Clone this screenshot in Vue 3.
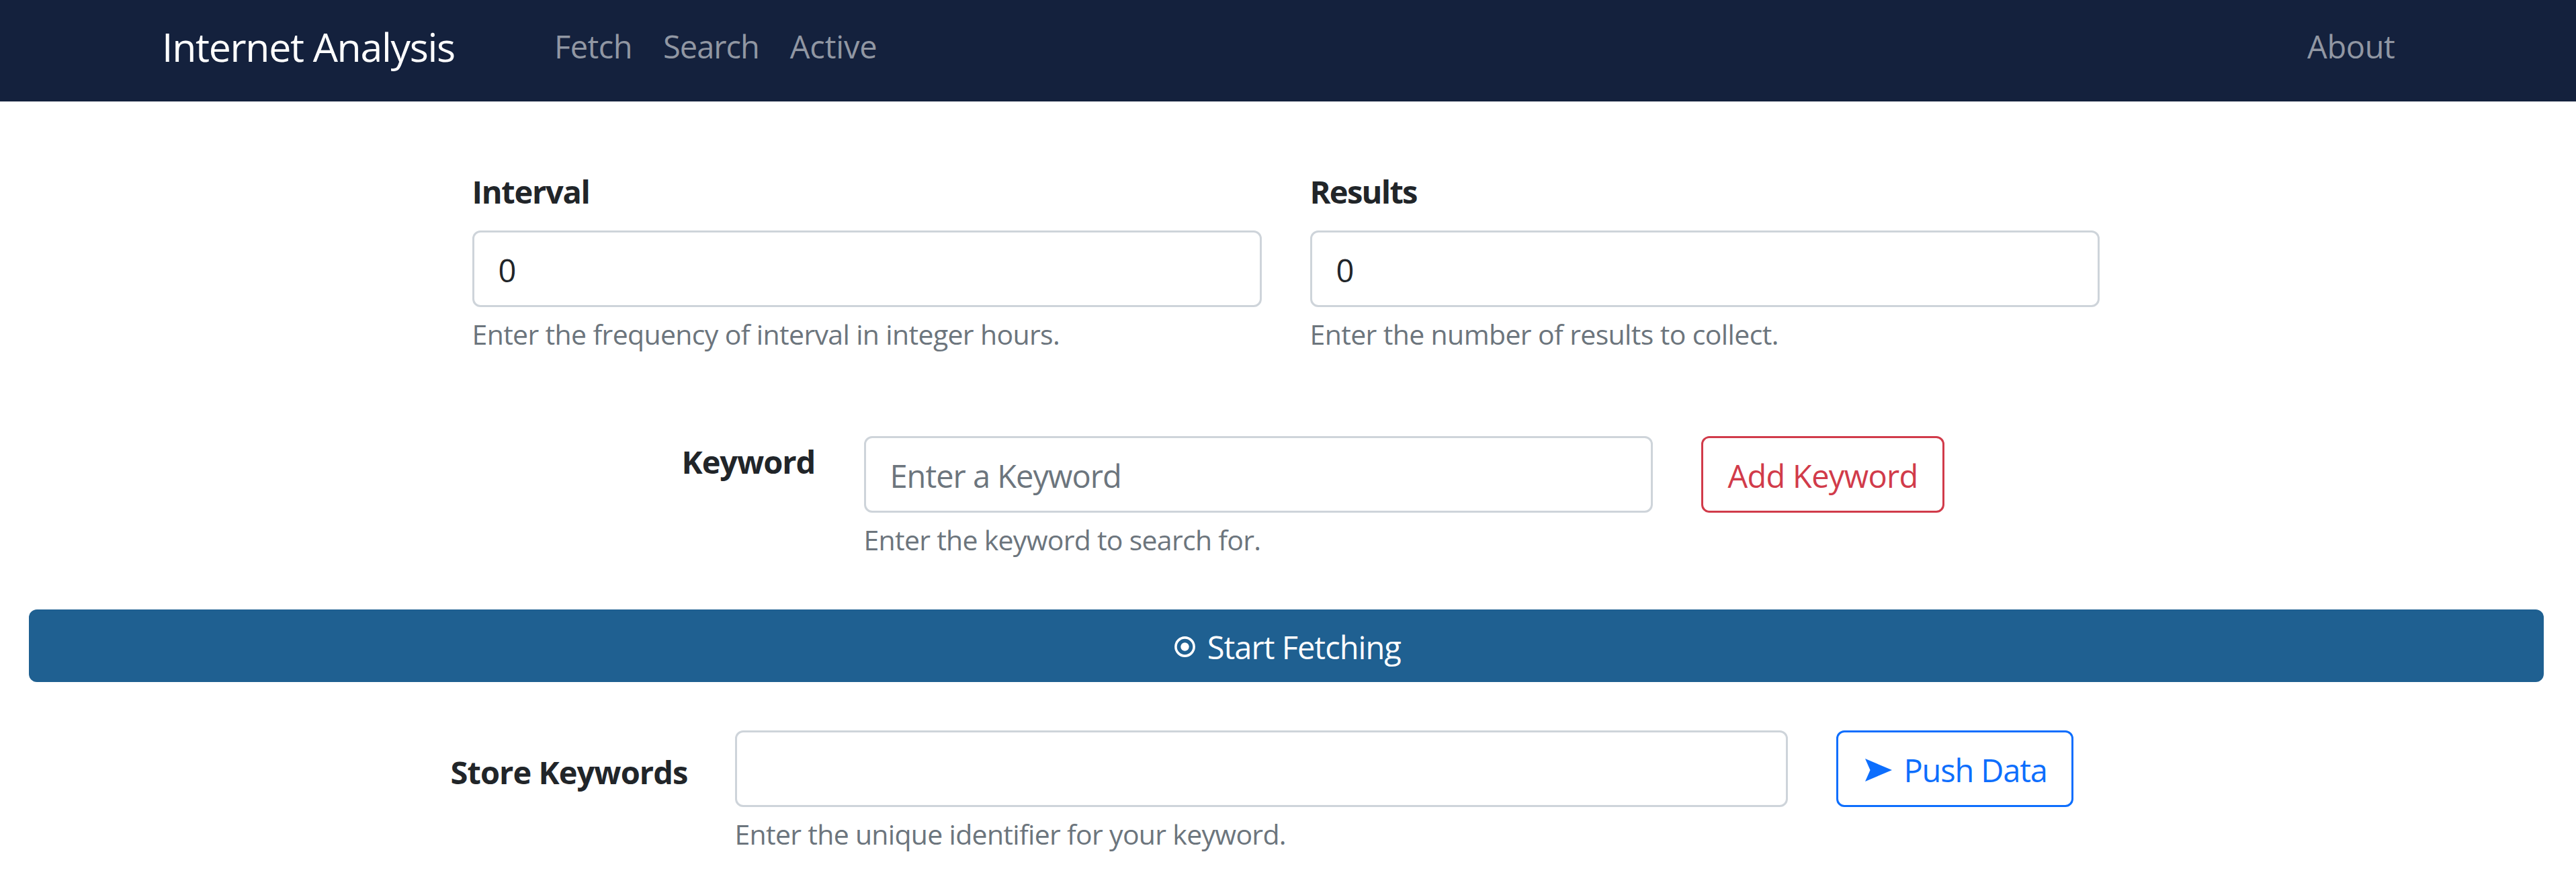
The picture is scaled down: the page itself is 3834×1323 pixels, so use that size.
<script setup>
import { ref } from 'vue'

const interval = ref('0')
const results = ref('0')
const keyword = ref('')
const identifier = ref('')
</script>

<template>
  <div class="page">
    <nav class="navbar">
      <a class="brand">Internet Analysis</a>
      <div class="links">
        <a class="fetch">Fetch</a>
        <a class="search">Search</a>
        <a class="active">Active</a>
      </div>
      <a class="about">About</a>
    </nav>

    <main>
      <section class="row settings">
        <div class="field">
          <label class="label interval">Interval</label>
          <input v-model="interval" class="control" type="text" />
          <p class="hint frequency">Enter the frequency of interval in integer hours.</p>
        </div>
        <div class="field">
          <label class="label results">Results</label>
          <input v-model="results" class="control" type="text" />
          <p class="hint number">Enter the number of results to collect.</p>
        </div>
      </section>

      <section class="row keyword-row">
        <label class="label keyword">Keyword</label>
        <div class="field">
          <input v-model="keyword" class="control" type="text" placeholder="Enter a Keyword" />
          <p class="hint find">Enter the keyword to search for.</p>
        </div>
        <button class="button add">Add Keyword</button>
      </section>

      <button class="start">
        <svg class="record" viewBox="0 0 31 31">
          <circle cx="15.5" cy="15.5" r="13.6" fill="none" stroke="currentColor" stroke-width="3.6" />
          <circle cx="15.5" cy="15.5" r="6.2" fill="currentColor" />
        </svg>
        <span>Start Fetching</span>
      </button>

      <section class="row store-row">
        <label class="label store">Store Keywords</label>
        <div class="field">
          <input v-model="identifier" class="control" type="text" />
          <p class="hint unique">Enter the unique identifier for your keyword.</p>
        </div>
        <button class="button push">
          <svg class="arrow" viewBox="0 0 40 34">
            <path d="M0 0 40 17 0 34 7.5 17Z" fill="currentColor" />
          </svg>
          <span>Push Data</span>
        </button>
      </section>
    </main>
  </div>
</template>

<style>
body {
  margin: 0;
  background: #fff;
}
</style>

<style scoped>
.page {
  box-sizing: border-box;
  width: 3834px;
  height: 1323px;
  overflow: hidden;
  background: #fff;
  color: #212529;
  font-family: "Open Sans", "Noto Sans", sans-serif;
  font-size: 47px;
  line-height: 72px;
}

.navbar {
  box-sizing: border-box;
  display: flex;
  align-items: center;
  height: 151px;
  padding: 0 269.5px 13px 241px;
  background: #14213d;
  color: #9197a3;
  white-space: nowrap;
}

.brand {
  width: 584px;
  color: #fff;
  font-size: 59px;
  line-height: 88px;
  letter-spacing: -1.33px;
}

.links {
  display: flex;
  gap: 46px;
}

.fetch { letter-spacing: -0.55px; }
.search { letter-spacing: -1px; }
.active { letter-spacing: -0.2px; }

.about {
  margin-left: auto;
  letter-spacing: -0.39px;
}

main {
  padding-top: 98px;
}

.row {
  box-sizing: border-box;
  display: flex;
  align-items: flex-start;
  gap: 72px;
}

.settings {
  height: 400px;
  padding-left: 703px;
}

.settings .field { width: 1175px; }
.settings .label { margin: 0 0 22px -0.5px; }

.keyword-row {
  height: 258px;
  padding-left: 1014.5px;
}

.keyword-row .label { width: 199.5px; margin-top: 1.5px; }
.keyword-row .field { width: 1174px; }

.store-row {
  padding: 72px 0 0 670.5px;
}

.store-row .label { width: 351.5px; margin-top: 25.5px; }
.store-row .field { width: 1567px; }

.label {
  display: block;
  flex: none;
  font-weight: 700;
  white-space: nowrap;
}

.interval { letter-spacing: -1.3px; }
.results { letter-spacing: -1.7px; }
.keyword { letter-spacing: -1.06px; }
.store { letter-spacing: -0.95px; }

.control {
  box-sizing: border-box;
  display: block;
  width: 100%;
  height: 114px;
  margin: 0;
  padding: 3px 36px 0 35.5px;
  border: 3px solid #ced4da;
  border-radius: 12px;
  outline: none;
  background: #fff;
  color: #212529;
  font: inherit;
  letter-spacing: -1px;
}

.control::placeholder {
  color: #6c757d;
  opacity: 1;
}

.hint {
  margin: 8.5px 0 0 -0.5px;
  color: #6c757d;
  font-size: 41px;
  line-height: 63px;
  white-space: nowrap;
}

.frequency { letter-spacing: -0.65px; }
.number { letter-spacing: -0.63px; }
.find { letter-spacing: -0.72px; }
.unique { letter-spacing: -0.7px; }

.button,
.start {
  box-sizing: border-box;
  display: flex;
  flex: none;
  align-items: center;
  justify-content: center;
  border-radius: 12px;
  font: inherit;
  white-space: nowrap;
}

.button {
  height: 114px;
  padding: 3px 0 0;
  border: 3px solid currentColor;
  background: #fff;
}

.add {
  width: 362px;
  color: #d13b4a;
  letter-spacing: -0.71px;
}

.push {
  justify-content: flex-start;
  width: 353px;
  padding-left: 40px;
  color: #0d6efd;
  gap: 17.5px;
  letter-spacing: -1.15px;
}

.arrow {
  width: 40px;
  height: 34px;
}

.start {
  width: 3743px;
  height: 108px;
  margin-left: 43px;
  padding: 3px 0 0 4px;
  border: 0;
  background: #1f6091;
  color: #fff;
  gap: 17.5px;
  letter-spacing: -0.97px;
}

.record {
  width: 31px;
  height: 31px;
}
</style>
